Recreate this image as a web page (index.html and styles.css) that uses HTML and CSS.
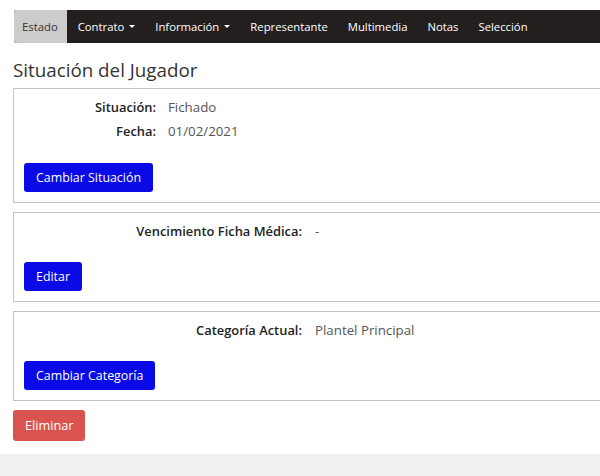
FILE: index.html
```html
<!DOCTYPE html>
<html lang="es">
<head>
<meta charset="utf-8">
<title>Situación del Jugador</title>
<link rel="stylesheet" href="styles.css">
</head>
<body>
<div class="page">
  <nav class="tabs">
    <a class="tab active">Estado</a>
    <a class="tab">Contrato <span class="caret"></span></a>
    <a class="tab">Información <span class="caret"></span></a>
    <a class="tab">Representante</a>
    <a class="tab">Multimedia</a>
    <a class="tab">Notas</a>
    <a class="tab">Selección</a>
  </nav>

  <h1 class="title">Situación del Jugador</h1>

  <section class="panel">
    <div class="rows rows-narrow">
      <div class="label">Situación:</div><div class="value">Fichado</div>
      <div class="label">Fecha:</div><div class="value">01/02/2021</div>
    </div>
    <button class="btn btn-blue">Cambiar Situación</button>
  </section>

  <section class="panel">
    <div class="rows rows-wide">
      <div class="label">Vencimiento Ficha Médica:</div><div class="value">-</div>
    </div>
    <button class="btn btn-blue">Editar</button>
  </section>

  <section class="panel">
    <div class="rows rows-wide">
      <div class="label">Categoría Actual:</div><div class="value">Plantel Principal</div>
    </div>
    <button class="btn btn-blue">Cambiar Categoría</button>
  </section>

  <button class="btn btn-red">Eliminar</button>
</div>
<footer class="footer"></footer>
</body>
</html>
```

FILE: styles.css
```css
html, body {
  margin: 0;
  padding: 0;
  overflow: hidden;
  background: #fff;
}
body {
  font-family: "Open Sans", "Noto Sans", sans-serif;
  font-size: 13px;
  color: #333;
}
.page {
  width: 640px;
  padding: 10px 0 0 13px;
  height: 454px;
  box-sizing: border-box;
}
.tabs {
  display: flex;
  align-items: stretch;
  height: 33px;
  margin-left: 1px;
  background: #231f1f;
  border-radius: 3px 0 0 3px;
}
.tab {
  display: flex;
  align-items: center;
  padding: 0 10px;
  color: #fff;
  font-size: 11.3px;
  white-space: nowrap;
}
.tab.active {
  background: #cccccc;
  color: #333;
  padding: 0 9px 0 8px;
  border-radius: 3px 0 0 3px;
}
.tab:nth-child(2) { padding-left: 11px; }
.caret {
  display: inline-block;
  width: 0;
  height: 0;
  margin-left: 5px;
  border-left: 3.5px solid transparent;
  border-right: 3.5px solid transparent;
  border-top: 3.5px solid #fff;
  vertical-align: middle;
}
.title {
  margin: 15px 0 0 0;
  font-size: 18.8px;
  font-weight: 400;
  line-height: 24px;
  color: #333;
}
.panel {
  margin-top: 6px;
  border: 1px solid #c4c4c4;
  padding: 6px 10px 10px 10px;
}
.panel + .panel { margin-top: 9px; }
.rows {
  display: grid;
  column-gap: 12px;
  row-gap: 0;
  line-height: 24px;
  font-size: 13.3px;
  margin-bottom: 19px;
}
.rows-narrow { grid-template-columns: 132px auto; margin-bottom: 20px; }
.rows-wide { grid-template-columns: 278px auto; column-gap: 13px; }
.label {
  text-align: right;
  font-weight: 600;
  font-size: 12.9px;
  color: #222;
}
.value {
  color: #555;
}
.btn {
  display: inline-block;
  border: 0;
  border-radius: 3px;
  font-family: "Open Sans", "Noto Sans", sans-serif;
  font-size: 12.4px;
  color: #fff;
  padding: 0 12px;
  height: 29px;
  line-height: 29px;
  cursor: pointer;
}
.btn-blue {
  background: #0a0ae6;
}
.btn-red {
  background: #d9534f;
  margin-top: 9px;
  height: 31px;
  line-height: 31px;
  font-size: 12.7px;
}
.footer {
  height: 32px;
  background: #f0f0f0;
}
```
